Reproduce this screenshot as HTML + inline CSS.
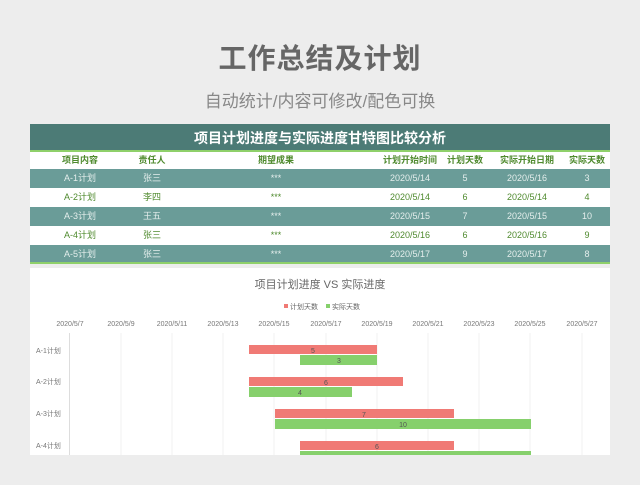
<!DOCTYPE html>
<html><head><meta charset="utf-8"><style>
*{margin:0;padding:0;box-sizing:border-box}
body{width:640px;height:485px;background:#ededed;font-family:"Liberation Sans","Noto Sans CJK SC",sans-serif;position:relative;overflow:hidden}
.t1{position:absolute;top:37px;left:0;width:640px;text-align:center;font-size:28px;font-weight:bold;color:#666;letter-spacing:1px}
.t2{position:absolute;top:87px;left:0;width:640px;text-align:center;font-size:17px;color:#888}
.tb{position:absolute;left:30px;top:124px;width:580px}
.hd{height:28px;background:#4c7b76;color:#fff;font-weight:bold;font-size:14px;text-align:center;line-height:28px;border-bottom:2px solid #8fd06a}
.r{height:19px;position:relative;font-size:9px;line-height:19px;color:#4f8a2e}
.r span{position:absolute;transform:translateX(-50%);white-space:nowrap}
.h{background:#fff;font-weight:bold;height:17px;line-height:17px}
.d{background:#6a9c98;color:#e4eeec}
.w{background:#fff;color:#4f8a2e}
.last{border-bottom:2px solid #8fd06a}
svg.cv{position:absolute;left:0;top:0}
</style></head><body>
<div class="t1">工作总结及计划</div>
<div class="t2">自动统计/内容可修改/配色可换</div>
<div class="tb">
<div class="hd">项目计划进度与实际进度甘特图比较分析</div>
<div class="r h"><span style="left:50px">项目内容</span><span style="left:122px">责任人</span><span style="left:246px">期望成果</span><span style="left:380px">计划开始时间</span><span style="left:435px">计划天数</span><span style="left:497px">实际开始日期</span><span style="left:557px">实际天数</span></div>
<div class="r d"><span style="left:50px">A-1计划</span><span style="left:122px">张三</span><span style="left:246px">***</span><span style="left:380px">2020/5/14</span><span style="left:435px">5</span><span style="left:497px">2020/5/16</span><span style="left:557px">3</span></div>
<div class="r w"><span style="left:50px">A-2计划</span><span style="left:122px">李四</span><span style="left:246px">***</span><span style="left:380px">2020/5/14</span><span style="left:435px">6</span><span style="left:497px">2020/5/14</span><span style="left:557px">4</span></div>
<div class="r d"><span style="left:50px">A-3计划</span><span style="left:122px">王五</span><span style="left:246px">***</span><span style="left:380px">2020/5/15</span><span style="left:435px">7</span><span style="left:497px">2020/5/15</span><span style="left:557px">10</span></div>
<div class="r w"><span style="left:50px">A-4计划</span><span style="left:122px">张三</span><span style="left:246px">***</span><span style="left:380px">2020/5/16</span><span style="left:435px">6</span><span style="left:497px">2020/5/16</span><span style="left:557px">9</span></div>
<div class="r d last"><span style="left:50px">A-5计划</span><span style="left:122px">张三</span><span style="left:246px">***</span><span style="left:380px">2020/5/17</span><span style="left:435px">9</span><span style="left:497px">2020/5/17</span><span style="left:557px">8</span></div>
</div>
<svg class="cv" width="640" height="455" viewBox="0 0 640 455">
<rect x="30" y="268" width="580" height="187" fill="#fff"/>
<g font-family="Liberation Sans,Noto Sans CJK SC,sans-serif">
<text x="320" y="288" font-size="11" fill="#666" text-anchor="middle">项目计划进度 VS 实际进度</text>
<rect x="284" y="304" width="4" height="4" fill="#f07a75"/><text x="290" y="309" font-size="7" fill="#666">计划天数</text>
<rect x="326" y="304" width="4" height="4" fill="#86d06c"/><text x="332" y="309" font-size="7" fill="#666">实际天数</text>
<g font-size="7" fill="#777" text-anchor="middle">
<text x="70" y="326">2020/5/7</text><text x="121" y="326">2020/5/9</text><text x="172" y="326">2020/5/11</text><text x="223" y="326">2020/5/13</text><text x="274" y="326">2020/5/15</text><text x="326" y="326">2020/5/17</text><text x="377" y="326">2020/5/19</text><text x="428" y="326">2020/5/21</text><text x="479" y="326">2020/5/23</text><text x="530" y="326">2020/5/25</text><text x="582" y="326">2020/5/27</text>
</g>
<g stroke="#f2f2f2" stroke-width="1"><line x1="121" y1="333" x2="121" y2="455"/><line x1="172" y1="333" x2="172" y2="455"/><line x1="223" y1="333" x2="223" y2="455"/><line x1="274" y1="333" x2="274" y2="455"/><line x1="326" y1="333" x2="326" y2="455"/><line x1="377" y1="333" x2="377" y2="455"/><line x1="428" y1="333" x2="428" y2="455"/><line x1="479" y1="333" x2="479" y2="455"/><line x1="530" y1="333" x2="530" y2="455"/><line x1="582" y1="333" x2="582" y2="455"/></g>
<line x1="69.5" y1="333" x2="69.5" y2="455" stroke="#ddd"/>
<g font-size="7" fill="#777"><text x="36" y="353">A-1计划</text><text x="36" y="384">A-2计划</text><text x="36" y="416">A-3计划</text><text x="36" y="448">A-4计划</text></g>
<g fill="#f07a75"><rect x="249" y="345" width="128" height="9"/><rect x="249" y="377" width="154" height="9"/><rect x="275" y="409" width="179" height="9"/><rect x="300" y="441" width="154" height="9"/></g>
<g fill="#86d06c"><rect x="300" y="355" width="77" height="10"/><rect x="249" y="387" width="103" height="10"/><rect x="275" y="419" width="256" height="10"/><rect x="300" y="451" width="231" height="10"/></g>
<g font-size="7" fill="#555" text-anchor="middle"><text x="313" y="353">5</text><text x="339" y="363">3</text><text x="326" y="385">6</text><text x="300" y="395">4</text><text x="364" y="417">7</text><text x="403" y="427">10</text><text x="377" y="449">6</text></g>
</g>
</svg>
</body></html>
